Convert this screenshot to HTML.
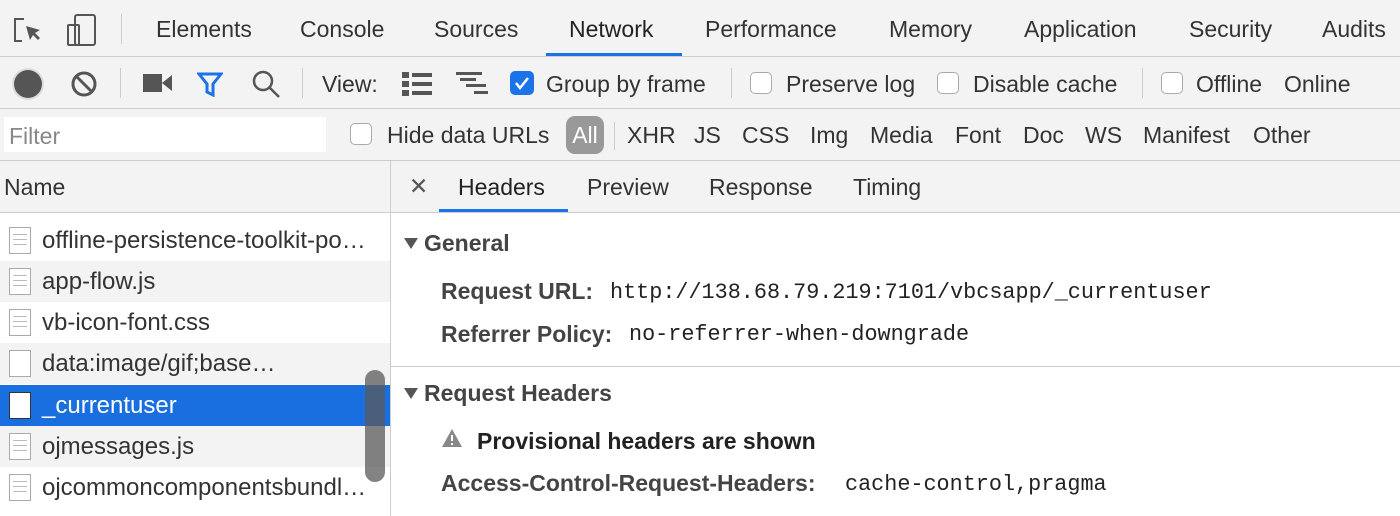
<!DOCTYPE html>
<html><head><meta charset="utf-8"><style>
*{margin:0;padding:0;box-sizing:border-box}
body{width:1400px;height:516px;overflow:hidden;background:#fff;font-family:"Liberation Sans",sans-serif;color:#333;position:relative;font-size:23px}
.a{position:absolute;white-space:nowrap}
.bar{position:absolute;left:0;width:1400px;background:#f3f3f3;border-bottom:1px solid #ccc}
.cb{position:absolute;width:22px;height:22px;border:1.5px solid #aaa;border-radius:5px;background:#fff}
.mono{font-family:"Liberation Mono",monospace;font-size:21.8px;color:#222}
.b{font-weight:bold;color:#444}
.row{position:absolute;left:0;width:390px;height:41px;overflow:hidden}
.row .a{font-size:24px}
.fi{position:absolute;left:9px;top:7px;width:22px;height:27px;border:1.5px solid #aaa;background:#fff}
.fi i{position:absolute;left:3px;right:3px;height:1px;background:#bbb}
.tri{position:absolute;width:0;height:0;border-left:7px solid transparent;border-right:7px solid transparent;border-top:11px solid #555}
</style></head><body>
<div class="bar" style="top:0;height:57px"></div>
<svg class="a" style="left:12px;top:16px" width="32" height="30" viewBox="0 0 32 30" fill="none" stroke="#555" stroke-width="2"><path d="M12 3H3v22h7"/><path d="M14 10l4 14 3-5 5 5 2-2-5-5 5-3z" fill="#555" stroke="none"/></svg>
<svg class="a" style="left:66px;top:13px" width="32" height="34" viewBox="0 0 32 34" fill="none" stroke="#555" stroke-width="2"><rect x="9" y="2" width="20" height="30" rx="2"/><rect x="2" y="12" width="11" height="20" rx="1"/></svg>
<div class="a" style="left:121px;top:14px;width:1px;height:30px;background:#ccc"></div>
<div class="a" style="left:156px;top:16px">Elements</div>
<div class="a" style="left:300px;top:16px">Console</div>
<div class="a" style="left:434px;top:16px">Sources</div>
<div class="a" style="left:569px;top:16px;color:#222">Network</div>
<div class="a" style="left:546px;top:53px;width:136px;height:3px;background:#1a73e8"></div>
<div class="a" style="left:705px;top:16px">Performance</div>
<div class="a" style="left:889px;top:16px">Memory</div>
<div class="a" style="left:1024px;top:16px">Application</div>
<div class="a" style="left:1189px;top:16px">Security</div>
<div class="a" style="left:1322px;top:16px">Audits</div>

<div class="bar" style="top:57px;height:52px"></div>
<div class="a" style="left:14px;top:70px;width:28px;height:28px;border-radius:50%;background:#555;box-shadow:0 0 0 2px #ddd"></div>
<svg class="a" style="left:70px;top:70px" width="28" height="28" viewBox="0 0 28 28" fill="none" stroke="#555" stroke-width="3"><circle cx="14" cy="14" r="11"/><path d="M6 6l16 16"/></svg>
<div class="a" style="left:120px;top:68px;width:1px;height:30px;background:#ccc"></div>
<svg class="a" style="left:143px;top:74px" width="30" height="18"><rect x="0" y="0" width="19" height="18" fill="#555"/><path d="M19 9l10-8v16z" fill="#555"/></svg>
<svg class="a" style="left:197px;top:71px" width="26" height="26" viewBox="0 0 26 26"><path d="M2 3h22l-8 10v11l-6-3v-8z" fill="none" stroke="#1a73e8" stroke-width="3"/></svg>
<svg class="a" style="left:251px;top:69px" width="30" height="30" fill="none" stroke="#555" stroke-width="2.5"><circle cx="12" cy="12" r="9"/><path d="M19 19l9 9"/></svg>
<div class="a" style="left:302px;top:68px;width:1px;height:30px;background:#ccc"></div>
<div class="a" style="left:322px;top:71px">View:</div>
<svg class="a" style="left:402px;top:72px" width="30" height="24" fill="#555"><rect x="0" y="0" width="7" height="6"/><rect x="10" y="1" width="20" height="4"/><rect x="0" y="9" width="7" height="6"/><rect x="10" y="10" width="20" height="4"/><rect x="0" y="18" width="7" height="6"/><rect x="10" y="19" width="20" height="4"/></svg>
<svg class="a" style="left:456px;top:72px" width="34" height="24" fill="#555"><rect x="0" y="0" width="26" height="3"/><rect x="4" y="6" width="16" height="3"/><rect x="10" y="12" width="20" height="3"/><rect x="18" y="19" width="14" height="3"/></svg>
<div class="a" style="left:510px;top:71px;width:24px;height:24px;border-radius:5px;background:#1a73e8"></div>
<svg class="a" style="left:510px;top:71px" width="24" height="24"><path d="M6 12l4 5 8-10" stroke="#fff" stroke-width="2.5" fill="none"/></svg>
<div class="a" style="left:546px;top:71px">Group by frame</div>
<div class="a" style="left:731px;top:68px;width:1px;height:30px;background:#ccc"></div>
<div class="cb" style="left:750px;top:72px"></div>
<div class="a" style="left:786px;top:71px">Preserve log</div>
<div class="cb" style="left:937px;top:72px"></div>
<div class="a" style="left:973px;top:71px">Disable cache</div>
<div class="a" style="left:1142px;top:68px;width:1px;height:30px;background:#ccc"></div>
<div class="cb" style="left:1161px;top:72px"></div>
<div class="a" style="left:1196px;top:71px">Offline</div>
<div class="a" style="left:1284px;top:71px">Online</div>

<div class="bar" style="top:109px;height:52px"></div>
<div class="a" style="left:4px;top:117px;width:322px;height:35px;background:#fff"></div>
<div class="a" style="left:9px;top:123px;color:#888">Filter</div>
<div class="cb" style="left:350px;top:123px"></div>
<div class="a" style="left:387px;top:122px">Hide data URLs</div>
<div class="a" style="left:566px;top:116px;width:38px;height:38px;border-radius:9px;background:#999;color:#fff;text-align:center;line-height:38px">All</div>
<div class="a" style="left:614px;top:122px;width:1px;height:28px;background:#ccc"></div>
<div class="a" style="left:627px;top:122px">XHR</div>
<div class="a" style="left:694px;top:122px">JS</div>
<div class="a" style="left:742px;top:122px">CSS</div>
<div class="a" style="left:810px;top:122px">Img</div>
<div class="a" style="left:870px;top:122px">Media</div>
<div class="a" style="left:955px;top:122px">Font</div>
<div class="a" style="left:1023px;top:122px">Doc</div>
<div class="a" style="left:1085px;top:122px">WS</div>
<div class="a" style="left:1143px;top:122px">Manifest</div>
<div class="a" style="left:1253px;top:122px">Other</div>

<div class="bar" style="top:161px;height:52px"></div>
<div class="a" style="left:4px;top:174px">Name</div>
<div class="a" style="left:409px;top:173px;color:#555">✕</div>
<div class="a" style="left:458px;top:174px;color:#222">Headers</div>
<div class="a" style="left:439px;top:209px;width:129px;height:3px;background:#1a73e8"></div>
<div class="a" style="left:587px;top:174px">Preview</div>
<div class="a" style="left:709px;top:174px">Response</div>
<div class="a" style="left:853px;top:174px">Timing</div>
<div class="a" style="left:390px;top:161px;width:1px;height:355px;background:#ccc"></div>

<div class="row" style="top:220px"><div class="fi"><i style="top:6px"></i><i style="top:11px"></i><i style="top:16px"></i></div><div class="a" style="left:42px;top:7px">offline-persistence-toolkit-po…</div></div>
<div class="row" style="top:261px;background:#f3f3f3"><div class="fi"><i style="top:6px"></i><i style="top:11px"></i><i style="top:16px"></i></div><div class="a" style="left:42px;top:7px">app-flow.js</div></div>
<div class="row" style="top:302px"><div class="fi"><i style="top:6px"></i><i style="top:11px"></i><i style="top:16px"></i></div><div class="a" style="left:42px;top:7px">vb-icon-font.css</div></div>
<div class="row" style="top:343px;background:#f3f3f3"><div class="fi"></div><div class="a" style="left:42px;top:7px">data:image/gif;base…</div></div>
<div class="row" style="top:385px;background:#1a6fe0"><div class="fi" style="border-color:#333"></div><div class="a" style="left:42px;top:7px;color:#fff">_currentuser</div></div>
<div class="row" style="top:426px;background:#f3f3f3"><div class="fi"><i style="top:6px"></i><i style="top:11px"></i><i style="top:16px"></i></div><div class="a" style="left:42px;top:7px">ojmessages.js</div></div>
<div class="row" style="top:467px"><div class="fi"><i style="top:6px"></i><i style="top:11px"></i><i style="top:16px"></i></div><div class="a" style="left:42px;top:7px">ojcommoncomponentsbundl…</div></div>
<div class="a" style="left:365px;top:370px;width:20px;height:112px;border-radius:10px;background:rgba(90,90,90,.75)"></div>

<div class="tri" style="left:404px;top:238px"></div>
<div class="a b" style="left:424px;top:230px">General</div>
<div class="a b" style="left:441px;top:278px">Request URL:</div>
<div class="a mono" style="left:610px;top:280px">http://138.68.79.219:7101/vbcsapp/_currentuser</div>
<div class="a b" style="left:441px;top:321px">Referrer Policy:</div>
<div class="a mono" style="left:629px;top:322px">no-referrer-when-downgrade</div>
<div class="a" style="left:391px;top:366px;width:1009px;height:1px;background:#ccc"></div>
<div class="tri" style="left:404px;top:388px"></div>
<div class="a b" style="left:424px;top:380px">Request Headers</div>
<svg class="a" style="left:441px;top:428px" width="22" height="20"><path d="M11 1L21 19H1z" fill="#888"/><rect x="10" y="7" width="2" height="6" fill="#fff"/><rect x="10" y="15" width="2" height="2" fill="#fff"/></svg>
<div class="a b" style="left:477px;top:428px;color:#222">Provisional headers are shown</div>
<div class="a b" style="left:441px;top:470px">Access-Control-Request-Headers:</div>
<div class="a mono" style="left:845px;top:472px">cache-control,pragma</div>
</body></html>
